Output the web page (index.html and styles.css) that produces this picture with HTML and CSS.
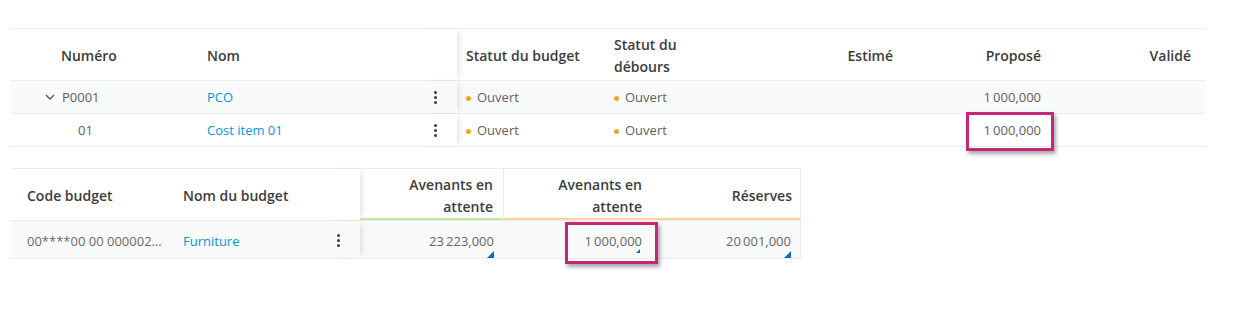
FILE: index.html
```html
<!DOCTYPE html>
<html lang="fr">
<head>
<meta charset="utf-8">
<link rel="stylesheet" href="styles.css">
</head>
<body>
<div class="page">
  <div class="table top">
    <div class="row head">
      <div class="cell num-h">Numéro</div>
      <div class="cell">Nom</div>
      <div class="cell kebab-col frozen-edge"></div>
      <div class="cell">Statut du budget</div>
      <div class="cell">Statut du<br>débours</div>
      <div class="cell right">Estimé</div>
      <div class="cell right">Proposé</div>
      <div class="cell right">Validé</div>
    </div>
    <div class="row body shade">
      <div class="cell num-1"><svg class="chev" width="10" height="6" viewBox="0 0 10 6"><path d="M1 1l4 4 4-4" fill="none" stroke="#555" stroke-width="1.3"/></svg>P0001</div>
      <div class="cell link">PCO</div>
      <div class="cell kebab-col frozen-edge"><span class="kebab"><i></i><i></i><i></i></span></div>
      <div class="cell"><span class="dot"></span>Ouvert</div>
      <div class="cell"><span class="dot"></span>Ouvert</div>
      <div class="cell right"></div>
      <div class="cell right">1&#8201;000,000</div>
      <div class="cell right"></div>
    </div>
    <div class="row body">
      <div class="cell num-2">01</div>
      <div class="cell link">Cost item 01</div>
      <div class="cell kebab-col frozen-edge"><span class="kebab"><i></i><i></i><i></i></span></div>
      <div class="cell"><span class="dot"></span>Ouvert</div>
      <div class="cell"><span class="dot"></span>Ouvert</div>
      <div class="cell right"></div>
      <div class="cell right hl-wrap">1&#8201;000,000<span class="hl hl-top"></span></div>
      <div class="cell right"></div>
    </div>
  </div>

  <div class="table bottom">
    <div class="row head">
      <div class="cell code-h">Code budget</div>
      <div class="cell name-h">Nom du budget</div>
      <div class="cell kebab-col2 frozen-edge"></div>
      <div class="cell right green sep">Avenants en<br>attente</div>
      <div class="cell right orange">Avenants en<br>attente</div>
      <div class="cell right orange">Réserves</div>
    </div>
    <div class="row body2 shade">
      <div class="cell code-h code">00****00 00 000002…</div>
      <div class="cell name-h link">Furniture</div>
      <div class="cell kebab-col2 frozen-edge"><span class="kebab"><i></i><i></i><i></i></span></div>
      <div class="cell right val">23&#8201;223,000<span class="tri"></span></div>
      <div class="cell right val hl-wrap">1&#8201;000,000<span class="tri small"></span><span class="hl hl-bot"></span></div>
      <div class="cell right val">20&#8201;001,000<span class="tri"></span></div>
    </div>
  </div>
</div>
</body>
</html>
```
FILE: styles.css
```css
* { box-sizing: border-box; }
html, body { margin: 0; padding: 0; background: #fff; }
body {
  font-family: "Open Sans", "Noto Sans", sans-serif;
  font-size: 13px;
  color: #5f6060;
  width: 1244px;
  height: 312px;
  overflow: hidden;
}
.page { padding: 28px 0 0 10px; }

.table { border-top: 1px solid #ececec; }
.top { width: 1196px; }
.bottom { width: 791px; margin-top: 21px; border-right: 1px solid #ececec; }

.row { display: grid; align-items: stretch; border-bottom: 1px solid #ececec; }
.top .row { grid-template-columns: 188px 222px 37px 148px 152px 151px 148px 150px; }
.bottom .row { grid-template-columns: 160px 155px 35px 144px 148px 149px; }

.head { height: 52px; }
.top .body { height: 33px; }
.body2 { height: 38px; }
.body2 .cell { padding-top: 2px; }
.shade { background: #f9fafa; }

.cell {
  display: flex;
  align-items: center;
  padding: 0 9px;
  position: relative;
  white-space: nowrap;
}
.head .cell {
  font-weight: 600;
  font-size: 14px;
  color: #3c3c3c;
  line-height: 22px;
  white-space: normal;
  padding-top: 2px;
}
.right { justify-content: flex-end; text-align: right; padding-right: 15px; }

.num-h { padding-left: 51px; }
.num-1 { padding-left: 35px; }
.num-2 { padding-left: 68px; }
.chev { margin-right: 7px; }
.link { color: #0696d7; }

.frozen-edge { box-shadow: 5px 0 6px -3px rgba(0,0,0,0.12); justify-content: flex-start; padding-left: 14px; }
.kebab-col2 { padding-left: 12px; }

.kebab { display: flex; flex-direction: column; gap: 2px; }
.kebab i { display: block; width: 3px; height: 3px; border-radius: 50%; background: #3c3c3c; }

.dot {
  width: 5px; height: 5px; border-radius: 50%;
  background: #f7a329;
  margin-right: 6px;
  margin-top: 3px;
}

.code-h { padding-left: 17px; }
.name-h { padding-left: 13px; }
.code { color: #6a6a6a; }

.bottom .right { padding-right: 10px; }
.bottom .head .cell:last-child { padding-right: 9px; }
.green { box-shadow: inset 0 -2px 0 #c6e2a6; }
.orange { box-shadow: inset 0 -2px 0 #fdd595; }
.sep { border-right: 1px solid #ececec; }
.val { color: #666; }

.tri {
  position: absolute;
  right: 10px;
  bottom: 0;
  width: 0; height: 0;
  border-left: 7px solid transparent;
  border-bottom: 7px solid #0b6cc0;
}
.tri.small { right: 12px; border-left-width: 4px; border-bottom-width: 4px; bottom: 5px; }

.hl {
  position: absolute;
  border: 3.5px solid #c6257a;
  box-shadow: 2px 3px 4px rgba(0,0,0,0.35);
  pointer-events: none;
}
.hl-top { left: 58px; right: 2px; top: -2px; bottom: -5px; }
.hl-bot { left: 61px; right: -6px; top: 1px; bottom: -6px; }
```
